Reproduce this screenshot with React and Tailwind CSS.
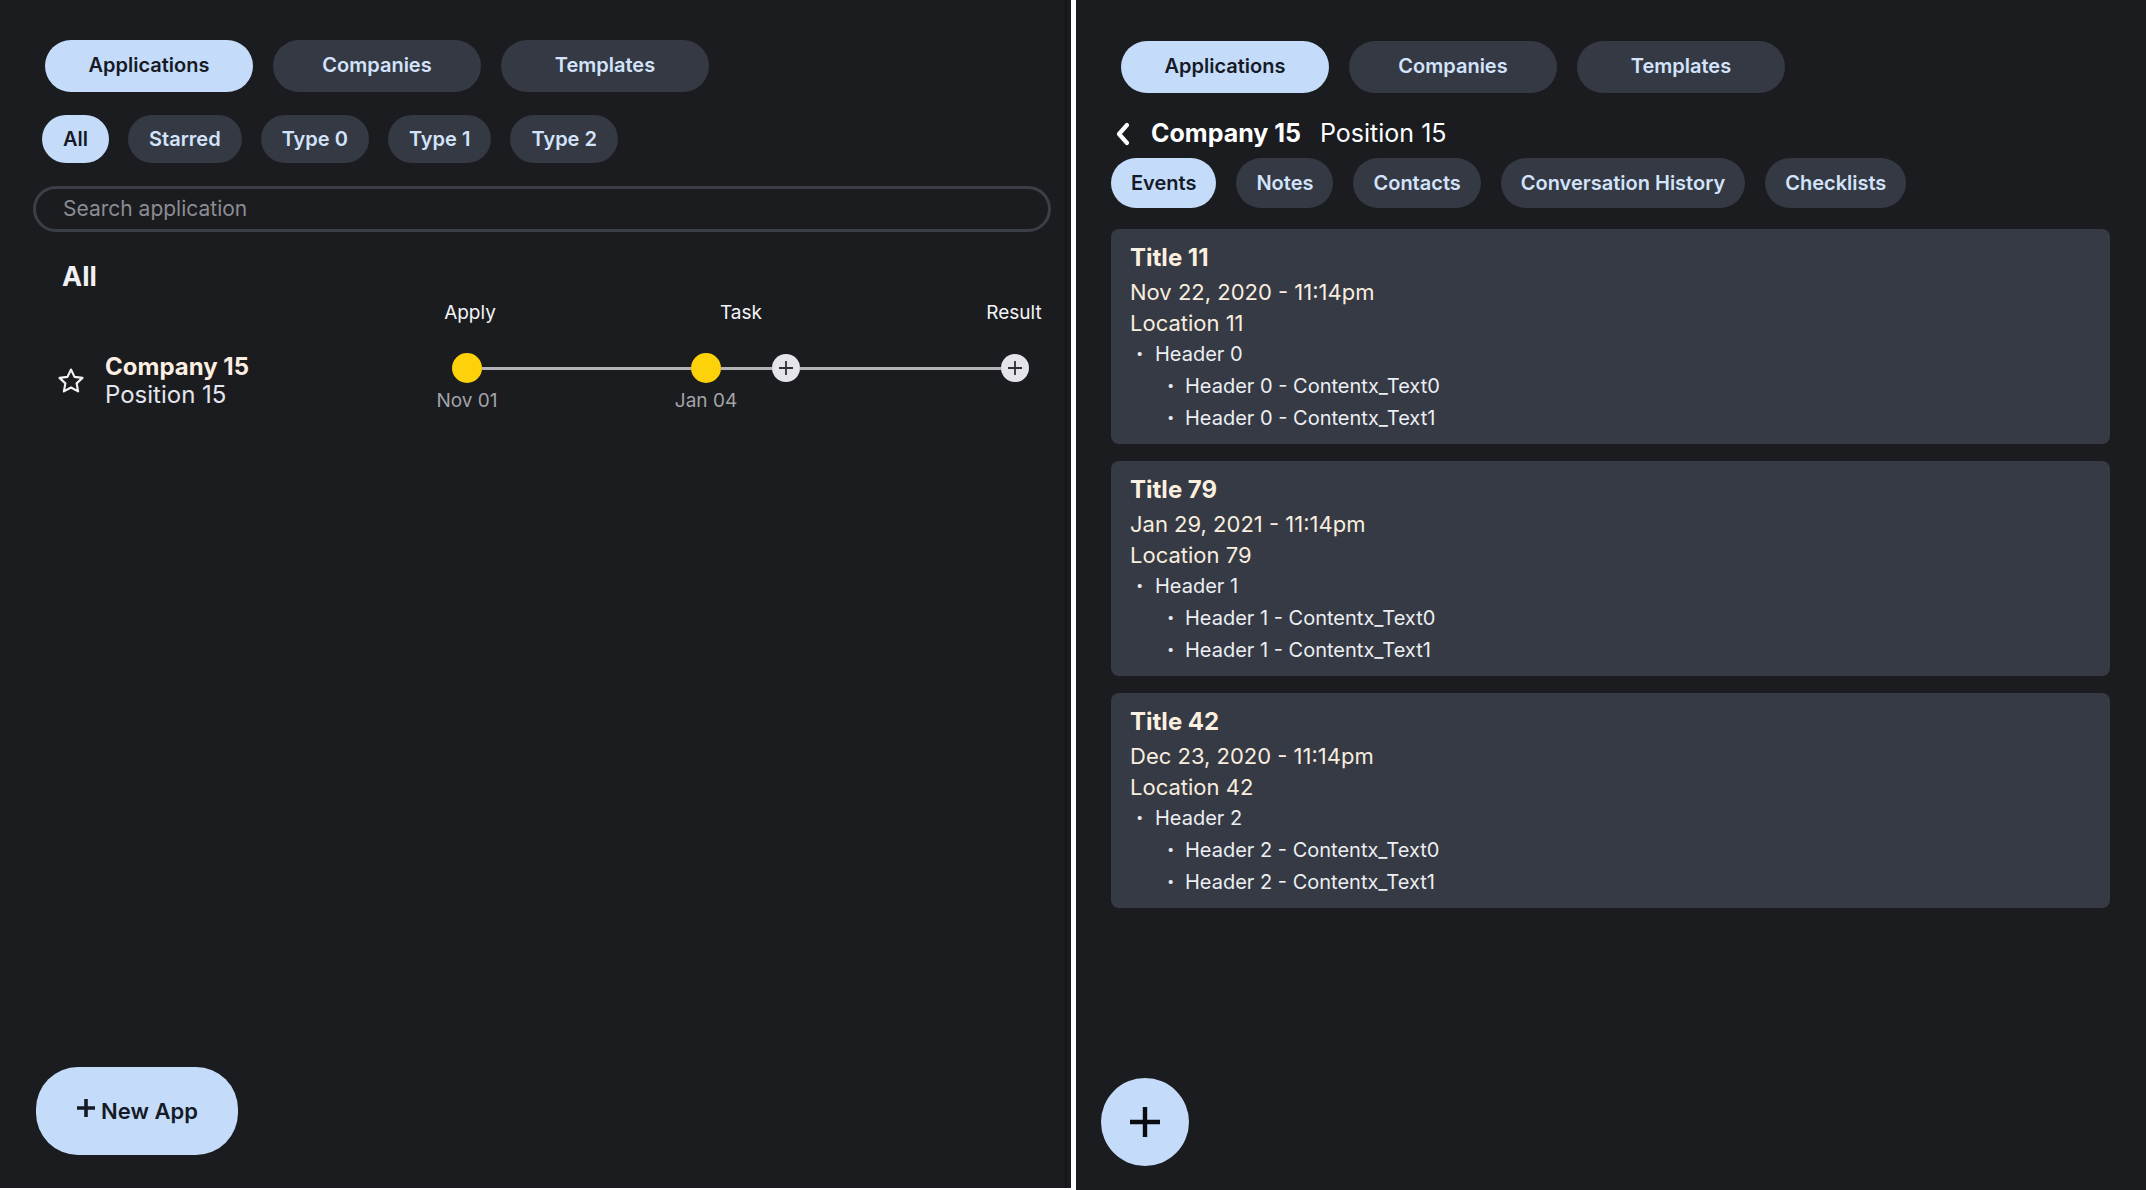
import React from "react";

const font = { fontFamily: "Inter, 'Noto Sans', sans-serif" };

function Pill({ active, children, className = "" }) {
  return (
    <div
      className={
        "flex items-center justify-center rounded-full font-semibold whitespace-nowrap " +
        (active ? "bg-[#c4dcfa] text-[#161a26] " : "bg-[#343943] text-[#d3e3fb] ") +
        className
      }
    >
      {children}
    </div>
  );
}

function TopTabs() {
  return (
    <div className="flex gap-[20px]">
      <Pill active className="w-[208px] h-[52px] text-[20px] pb-[2px]">Applications</Pill>
      <Pill className="w-[208px] h-[52px] text-[20px] pb-[2px]">Companies</Pill>
      <Pill className="w-[208px] h-[52px] text-[20px] pb-[2px]">Templates</Pill>
    </div>
  );
}

function YellowDot({ label }) {
  return (
    <div className="flex flex-col items-center w-[30px]">
      <div className="w-[30px] h-[30px] rounded-full bg-[#fdd20a]" />
      <div className="mt-[6px] whitespace-nowrap text-[19px] leading-[24px] text-[#a3a4a8]">{label}</div>
    </div>
  );
}

function PlusDot() {
  return (
    <div className="mt-[1px] w-[28px] h-[28px] rounded-full bg-[#e4e4ea] flex items-center justify-center">
      <svg width="18" height="18" viewBox="0 0 18 18">
        <path d="M9 2v14M2 9h14" stroke="#2f3035" strokeWidth="1.8" />
      </svg>
    </div>
  );
}

function Line({ w }) {
  return <div className={"h-[3px] mt-[14px] bg-[#b4b4b8] " + w} />;
}

function LeftPanel() {
  return (
    <div className="relative w-[1071px] h-[1188px] bg-[#1b1c20] shrink-0">
      <div className="absolute right-[4px] top-0 bottom-0 w-[2px] bg-[#141518]" />
      <div className="pt-[40px] pl-[33px]">
        <div className="ml-[12px]">
          <TopTabs />
        </div>
        <div className="mt-[23px] ml-[9px] flex gap-[19px]">
          <Pill active className="h-[48px] px-[21px] text-[20px]">All</Pill>
          <Pill className="h-[48px] px-[21px] text-[20px]">Starred</Pill>
          <Pill className="h-[48px] px-[21px] text-[20px]">Type 0</Pill>
          <Pill className="h-[48px] px-[21px] text-[20px]">Type 1</Pill>
          <Pill className="h-[48px] px-[21px] text-[20px]">Type 2</Pill>
        </div>
        <div className="mt-[23px] w-[1018px] h-[46px] rounded-full border-[3px] border-[#3b3f47] flex items-center pl-[27px]">
          <span className="text-[21px] text-[#8b8c91]">Search application</span>
        </div>
        <div className="mt-[28px] ml-[29px] text-[27px] leading-[34px] font-bold text-[#f1f1f3]">All</div>
        <div className="mt-[6px] flex text-[19px] leading-[26px] text-[#f4f4f6]">
          <div className="ml-[387px] w-[100px] text-center">Apply</div>
          <div className="ml-[171px] w-[100px] text-center">Task</div>
          <div className="ml-[173px] w-[100px] text-center">Result</div>
        </div>
        <div className="mt-[27px] flex items-start">
          <div className="w-[419px] flex items-center">
            <svg className="ml-[23px]" width="30" height="30" viewBox="0 0 24 24" fill="none" stroke="#f2f2f4" strokeWidth="1.7" strokeLinejoin="round">
              <path d="M12 2.8l2.8 5.9 6.4.8-4.7 4.4 1.2 6.4L12 17.2l-5.7 3.1 1.2-6.4-4.7-4.4 6.4-.8z" />
            </svg>
            <div className="ml-[19px] flex flex-col">
              <div className="text-[24px] leading-[28px] font-bold text-[#fcefe1]">Company 15</div>
              <div className="text-[24px] leading-[28px] text-[#e3e6ec]">Position 15</div>
            </div>
          </div>
          <div className="flex items-start">
            <YellowDot label="Nov 01" />
            <Line w="w-[209px]" />
            <YellowDot label="Jan 04" />
            <Line w="w-[51px]" />
            <PlusDot />
            <Line w="w-[201px]" />
            <PlusDot />
          </div>
        </div>
      </div>
      <div className="absolute left-[36px] bottom-[33px] w-[202px] h-[88px] rounded-[42px] bg-[#c4dcfa] flex items-center justify-center gap-[5px] text-[#161a26]">
        <svg className="-mt-[7px]" width="20" height="20" viewBox="0 0 20 20">
          <path d="M10 1v18M1 10h18" stroke="#161a26" strokeWidth="3.6" />
        </svg>
        <span className="text-[22px] font-semibold">New App</span>
      </div>
    </div>
  );
}

function Bullet({ children, indent }) {
  return (
    <div className={"flex items-center h-[32px] text-[20px] text-[#eceef2] " + (indent ? "pl-[56px]" : "pl-[25px]")}>
      <span className={"text-[13px] text-[#e6e7ea] " + (indent ? "w-[18px]" : "w-[19px]")}>•</span>
      <span>{children}</span>
    </div>
  );
}

function EventCard({ title, date, loc, h }) {
  return (
    <div className="w-[999px] rounded-[8px] bg-[#353a45] pt-[12px] pb-[10px] pl-[19px]">
      <div className="h-[34px] flex items-center text-[24px] font-bold text-[#fbefdf]">{title}</div>
      <div className="h-[34px] flex items-center text-[22px] text-[#f8eddf]">{date}</div>
      <div className="h-[29px] flex items-center text-[22px] text-[#f8eddf]">{loc}</div>
      <div className="-ml-[19px]">
        <Bullet>Header {h}</Bullet>
        <Bullet indent>Header {h} - Contentx_Text0</Bullet>
        <Bullet indent>Header {h} - Contentx_Text1</Bullet>
      </div>
    </div>
  );
}

function RightPanel() {
  const tabs = ["Events", "Notes", "Contacts", "Conversation History", "Checklists"];
  return (
    <div className="relative w-[1070px] h-[1190px] bg-[#1b1c20] shrink-0">
      <div className="pt-[41px] pl-[35px]">
        <div className="ml-[10px]">
          <TopTabs />
        </div>
        <div className="mt-[24px] ml-[4px] h-[34px] flex items-center text-[25px] text-white">
          <svg width="16" height="24" viewBox="0 0 16 24" fill="none" stroke="#ffffff" strokeWidth="4.2" strokeLinecap="round" strokeLinejoin="round">
            <path d="M12 3L4 12l8 9" />
          </svg>
          <span className="ml-[20px] font-bold">Company 15</span>
          <span className="ml-[19px]">Position 15</span>
        </div>
        <div className="mt-[7px] flex gap-[20px]">
          {tabs.map((t, i) => (
            <Pill key={t} active={i === 0} className="h-[50px] px-[20px] text-[20px]">
              {t}
            </Pill>
          ))}
        </div>
        <div className="mt-[21px] flex flex-col gap-[17px]">
          <EventCard title="Title 11" date="Nov 22, 2020 - 11:14pm" loc="Location 11" h={0} />
          <EventCard title="Title 79" date="Jan 29, 2021 - 11:14pm" loc="Location 79" h={1} />
          <EventCard title="Title 42" date="Dec 23, 2020 - 11:14pm" loc="Location 42" h={2} />
        </div>
      </div>
      <div className="absolute left-[25px] bottom-[24px] w-[88px] h-[88px] rounded-full bg-[#c4dcfa] flex items-center justify-center">
        <svg width="34" height="34" viewBox="0 0 34 34">
          <path d="M17 2v30M2 17h30" stroke="#0b0c10" strokeWidth="4.4" />
        </svg>
      </div>
    </div>
  );
}

export default function App() {
  return (
    <div className="flex w-[2146px] h-[1190px] bg-white overflow-hidden" style={font}>
      <LeftPanel />
      <div className="w-[5px] shrink-0" />
      <RightPanel />
    </div>
  );
}
